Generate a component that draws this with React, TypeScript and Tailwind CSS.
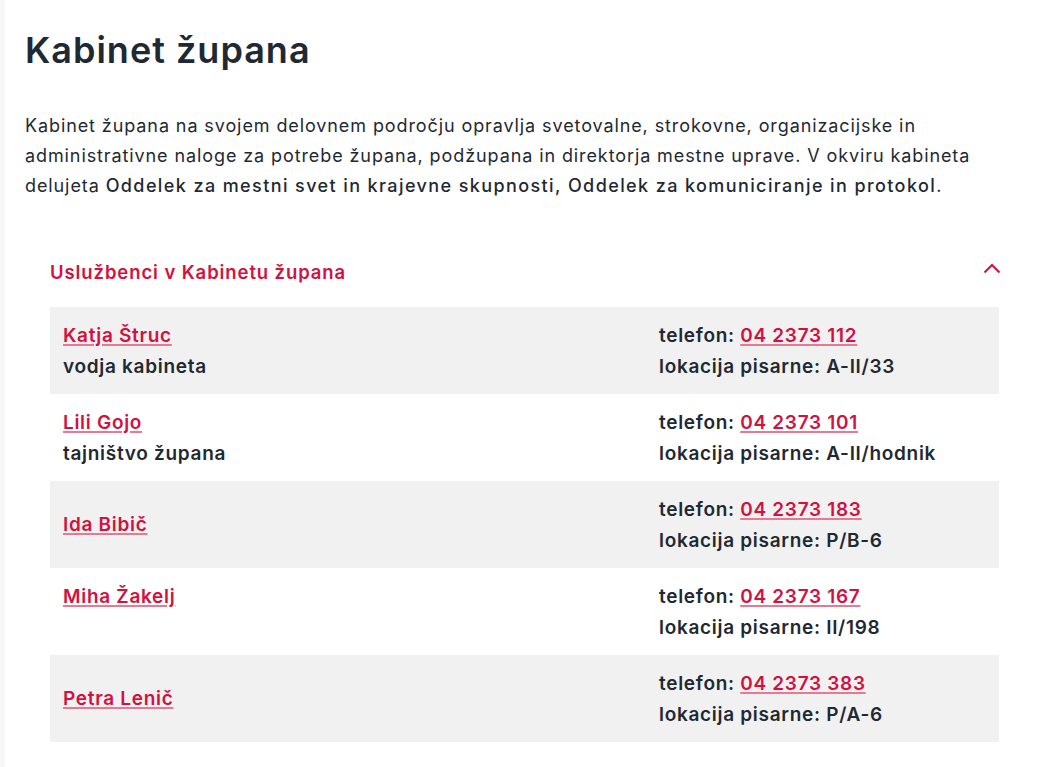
import React from "react";

type Person = {
  name: string;
  role?: string;
  blank?: boolean;
  phone: string;
  office: string;
};

const people: Person[] = [
  { name: "Katja Štruc", role: "vodja kabineta", phone: "04 2373 112", office: "A-II/33" },
  { name: "Lili Gojo", role: "tajništvo župana", phone: "04 2373 101", office: "A-II/hodnik" },
  { name: "Ida Bibič", phone: "04 2373 183", office: "P/B-6" },
  { name: "Miha Žakelj", blank: true, phone: "04 2373 167", office: "II/198" },
  { name: "Petra Lenič", phone: "04 2373 383", office: "P/A-6" },
];

const linkCls =
  "text-[#d3103f] underline decoration-[#e57a94] decoration-2 underline-offset-[2px]";

const App: React.FC = () => {
  return (
    <div
      className="flex min-h-[767px] bg-white text-[#1f2933]"
      style={{ fontFamily: "Inter, 'Noto Sans', sans-serif" }}
    >
      <div className="w-[5px] shrink-0 bg-[#f8f8f8]" />
      <div className="flex-1 pl-5 pr-[22px]">
        <h1 className="pt-[28px] text-[36px] font-semibold leading-[44px] tracking-[1px]">
          Kabinet župana
        </h1>
        <p className="mt-[39px] text-[18px] leading-[30px] tracking-[0.9px]">
          Kabinet župana na svojem delovnem področju opravlja svetovalne, strokovne, organizacijske in
          <br />
          administrativne naloge za potrebe župana, podžupana in direktorja mestne uprave. V okviru kabineta
          <br />
          delujeta{" "}
          <span className="font-medium tracking-[1.4px]">
            Oddelek za mestni svet in krajevne skupnosti, Oddelek za komuniciranje in protokol
          </span>
          .
        </p>

        <div className="mt-[40px] px-[25px]">
          <div className="flex items-center justify-between pt-[16px] pb-[20px]">
            <span className="text-[18.5px] font-semibold leading-[30px] text-[#d3103f] tracking-[0.9px]">
              Uslužbenci v Kabinetu župana
            </span>
            <svg width="18" height="11" viewBox="0 0 18 11" className="mr-[-2px] mb-[8px]">
              <polyline points="1.5,9.5 9,2 16.5,9.5" fill="none" stroke="#d3103f" strokeWidth="2" />
            </svg>
          </div>

          <div>
            {people.map((p, i) => (
              <div
                key={p.name}
                className={`grid grid-cols-[596px_1fr] items-center px-[13px] py-[12.5px] text-[19px] font-semibold leading-[31px] tracking-[0.7px] ${
                  i % 2 === 0 ? "bg-[#f1f1f1]" : "bg-white"
                }`}
              >
                <div>
                  <div>
                    <a href="#" className={linkCls}>
                      {p.name}
                    </a>
                  </div>
                  {p.role && <div>{p.role}</div>}
                  {p.blank && <div>&nbsp;</div>}
                </div>
                <div>
                  <div>
                    telefon:{" "}
                    <a href="#" className={linkCls}>
                      {p.phone}
                    </a>
                  </div>
                  <div>lokacija pisarne: {p.office}</div>
                </div>
              </div>
            ))}
          </div>
        </div>
      </div>
    </div>
  );
};

export default App;
